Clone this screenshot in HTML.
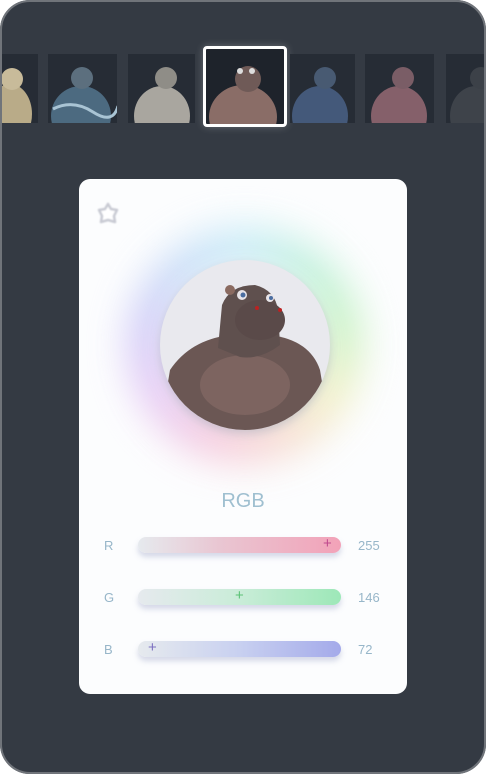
<!DOCTYPE html>
<html><head><style>
*{margin:0;padding:0;box-sizing:border-box}
html,body{width:486px;height:774px;background:#fff;overflow:hidden;font-family:"Liberation Sans",sans-serif}
.frame{position:absolute;left:0;top:0;width:486px;height:774px;border-radius:30px;background:#343a43;overflow:hidden}
.edge{position:absolute;left:0;top:0;width:486px;height:774px;border-radius:30px;border:2px solid #70747a;pointer-events:none}
.th{position:absolute;top:54px;height:69px;background:#262c35;overflow:hidden}
.sel{position:absolute;left:203px;top:46px;width:84px;height:81px;border:3px solid #fff;border-radius:4px;background:#1e232b;overflow:hidden;box-shadow:0 0 8px rgba(255,255,255,.25)}
.card{position:absolute;left:79px;top:179px;width:328px;height:515px;background:#fcfdfe;border-radius:11px}
.glow{position:absolute;left:125px;top:225px;width:240px;height:240px;border-radius:50%;background:conic-gradient(from 0deg,#c7ecf7,#bdf0da,#c8f2c2,#f2f0c4,#f7d9d0,#f5c6dc,#e5c7f4,#cfc9f7,#c7dcf7,#c7ecf7);filter:blur(18px);opacity:.85}
.glowmask{position:absolute;left:165px;top:265px;width:160px;height:160px;border-radius:50%;background:#fff;filter:blur(12px)}
.circle{position:absolute;left:160px;top:260px;width:170px;height:170px;border-radius:50%;background:#e9e9ee;overflow:hidden;box-shadow:0 4px 10px rgba(120,130,150,.35)}
.lbl{position:absolute;color:#97b6c9;font-size:13px}
.bar{position:absolute;left:138px;width:203px;height:16px;border-radius:8px;box-shadow:0 4px 6px rgba(140,150,190,.35)}
.plus{position:absolute;top:-1px;font-size:15px;line-height:16px}
</style></head><body>
<div class="frame">
  <div class="th" style="left:-2px;width:40px"><svg width="40" height="69"><ellipse cx="12" cy="60" rx="22" ry="30" fill="#b9ab88"/><ellipse cx="14" cy="25" rx="11" ry="11" fill="#c8bb9a"/></svg></div>
  <div class="th" style="left:48px;width:69px"><svg width="69" height="69"><ellipse cx="33" cy="62" rx="30" ry="30" fill="#4c6a80"/><ellipse cx="34" cy="24" rx="11" ry="11" fill="#5c6f7e"/><path d="M5 55 Q25 45 45 58 T70 52" stroke="#a9c4d4" stroke-width="3" fill="none"/></svg></div>
  <div class="th" style="left:128px;width:67px"><svg width="67" height="69"><ellipse cx="34" cy="62" rx="28" ry="30" fill="#a9a69f"/><ellipse cx="38" cy="24" rx="11" ry="11" fill="#8f8d87"/></svg></div>
  <div class="sel"><svg width="78" height="75"><ellipse cx="37" cy="68" rx="34" ry="32" fill="#8a6d67"/><ellipse cx="42" cy="30" rx="13" ry="13" fill="#6f5a57"/><circle cx="34" cy="22" r="3" fill="#ddd"/><circle cx="46" cy="22" r="3" fill="#ddd"/></svg></div>
  <div class="th" style="left:290px;width:65px"><svg width="65" height="69"><ellipse cx="30" cy="62" rx="28" ry="30" fill="#44597a"/><ellipse cx="35" cy="24" rx="11" ry="11" fill="#485a72"/></svg></div>
  <div class="th" style="left:365px;width:69px"><svg width="69" height="69"><ellipse cx="34" cy="62" rx="28" ry="30" fill="#85606a"/><ellipse cx="38" cy="24" rx="11" ry="11" fill="#7a5d66"/></svg></div>
  <div class="th" style="left:446px;width:40px"><svg width="40" height="69"><ellipse cx="30" cy="62" rx="26" ry="30" fill="#3e434a"/><ellipse cx="35" cy="24" rx="11" ry="11" fill="#3c4148"/></svg></div>

  <div class="card"></div>
  <svg style="position:absolute;left:97px;top:202px;filter:blur(.8px)" width="22" height="22"><path d="M11 2 L14 7 L20 8 L17 14 L18 20 L11 18 L4 20 L5 14 L2 8 L8 7 Z" fill="#fff" stroke="#c8cad3" stroke-width="2.5" stroke-linejoin="round"/></svg>
  <div class="glow"></div>
  <div class="glowmask"></div>
  <div class="circle"><svg width="170" height="170">
    <path d="M0 170 L10 110 Q30 80 70 75 L110 75 Q150 80 160 110 L170 170 Z" fill="#6b5754"/>
    <ellipse cx="85" cy="125" rx="45" ry="30" fill="#7d6460"/>
    <path d="M62 45 Q70 25 95 25 Q115 30 118 50 L120 85 Q100 100 80 97 L58 88 Z" fill="#5f504e"/>
    <ellipse cx="100" cy="60" rx="25" ry="20" fill="#5a4a49"/>
    <circle cx="70" cy="30" r="5" fill="#8a6a60"/>
    <circle cx="82" cy="35" r="5" fill="#e8e4e8"/><circle cx="83" cy="35" r="2.5" fill="#4a6da0"/>
    <circle cx="110" cy="38" r="4" fill="#e8e4e8"/><circle cx="111" cy="38" r="2" fill="#4a6da0"/>
    <circle cx="97" cy="48" r="2" fill="#b22"/><circle cx="120" cy="50" r="2" fill="#b22"/>
  </svg></div>

  <div style="position:absolute;left:0;width:486px;top:490px;text-align:center;color:#9fbfd0;font-size:20px">RGB</div>

  <div class="lbl" style="left:104px;top:538px">R</div>
  <div class="bar" style="top:537px;background:linear-gradient(90deg,#e6eaee,#e9c6d2 40%,#f2a2b8)"><span class="plus" style="left:185px;color:#c04a8e">+</span></div>
  <div class="lbl" style="left:358px;top:538px">255</div>

  <div class="lbl" style="left:104px;top:590px">G</div>
  <div class="bar" style="top:589px;background:linear-gradient(90deg,#e6eaee,#c9ecd8 50%,#9de8b8)"><span class="plus" style="left:97px;color:#5cc276">+</span></div>
  <div class="lbl" style="left:358px;top:590px">146</div>

  <div class="lbl" style="left:104px;top:642px">B</div>
  <div class="bar" style="top:641px;background:linear-gradient(90deg,#e6eaee,#c8d0f0 50%,#a4aaea)"><span class="plus" style="left:10px;color:#7c70c0">+</span></div>
  <div class="lbl" style="left:358px;top:642px">72</div>
</div>
<div class="edge"></div>
</body></html>
